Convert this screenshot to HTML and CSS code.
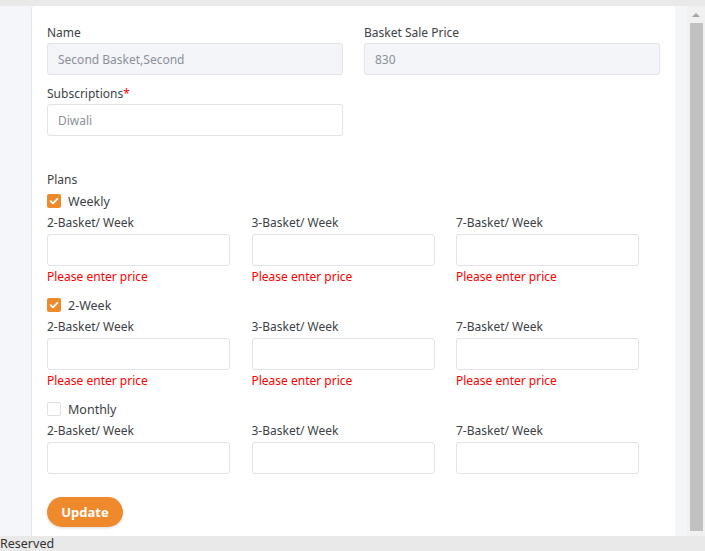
FILE: index.html
```html
<!DOCTYPE html>
<html>
<head>
<meta charset="utf-8">
<link rel="stylesheet" href="styles.css">
</head>
<body>
<div class="topbar"></div>
<div class="viewport">
  <div class="main">
    <div class="card">
      <div class="row two">
        <div class="field">
          <label class="lbl">Name</label>
          <input class="inp disabled" value="Second Basket,Second" disabled>
        </div>
        <div class="field">
          <label class="lbl">Basket Sale Price</label>
          <input class="inp disabled" value="830" disabled>
        </div>
      </div>
      <div class="row two gap-sm">
        <div class="field">
          <label class="lbl">Subscriptions<span class="req">*</span></label>
          <input class="inp" value="Diwali">
        </div>
      </div>

      <div class="plans-title">Plans</div>

      <div class="plan">
        <div class="check-row">
          <span class="cb on"><svg viewBox="0 0 14 14" width="14" height="14"><path d="M3.6 7.2 L6 9.4 L10.4 4.8" fill="none" stroke="#fff" stroke-width="1.8" stroke-linecap="round" stroke-linejoin="round"/></svg></span>
          <span class="cb-label">Weekly</span>
        </div>
        <div class="row three">
          <div class="field"><label class="lbl">2-Basket/ Week</label><input class="inp"><div class="err">Please enter price</div></div>
          <div class="field"><label class="lbl">3-Basket/ Week</label><input class="inp"><div class="err">Please enter price</div></div>
          <div class="field"><label class="lbl">7-Basket/ Week</label><input class="inp"><div class="err">Please enter price</div></div>
        </div>
      </div>

      <div class="plan">
        <div class="check-row">
          <span class="cb on"><svg viewBox="0 0 14 14" width="14" height="14"><path d="M3.6 7.2 L6 9.4 L10.4 4.8" fill="none" stroke="#fff" stroke-width="1.8" stroke-linecap="round" stroke-linejoin="round"/></svg></span>
          <span class="cb-label">2-Week</span>
        </div>
        <div class="row three">
          <div class="field"><label class="lbl">2-Basket/ Week</label><input class="inp"><div class="err">Please enter price</div></div>
          <div class="field"><label class="lbl">3-Basket/ Week</label><input class="inp"><div class="err">Please enter price</div></div>
          <div class="field"><label class="lbl">7-Basket/ Week</label><input class="inp"><div class="err">Please enter price</div></div>
        </div>
      </div>

      <div class="plan">
        <div class="check-row">
          <span class="cb"></span>
          <span class="cb-label">Monthly</span>
        </div>
        <div class="row three">
          <div class="field"><label class="lbl">2-Basket/ Week</label><input class="inp"></div>
          <div class="field"><label class="lbl">3-Basket/ Week</label><input class="inp"></div>
          <div class="field"><label class="lbl">7-Basket/ Week</label><input class="inp"></div>
        </div>
      </div>

      <button class="btn">Update</button>
    </div>
  </div>
  <div class="scrollbar">
    <div class="arrow"></div>
    <div class="thumb"></div>
  </div>
</div>
<div class="footer">Reserved</div>
</body>
</html>
```
FILE: styles.css
```css
* { box-sizing: border-box; }
html, body { margin: 0; padding: 0; }
body {
  width: 705px;
  height: 551px;
  overflow: hidden;
  font-family: "Noto Sans", "Open Sans", sans-serif;
  font-size: 12px;
  color: #3c3f45;
  background: #e9e9e9;
}
.topbar { height: 6px; background: #e9e9e9; }
.viewport {
  display: flex;
  height: 530px;
  background: #f5f6fa;
}
.main {
  flex: 1;
  padding-left: 31px;
  padding-right: 12px;
  overflow: hidden;
}
.card {
  background: #fff;
  height: 100%;
  border-left: 1px solid #e3e5ea;
  border-radius: 3px 3px 0 0;
  padding: 17px 16px 0 15px;
}
.row { display: grid; }
.row.two { grid-template-columns: 296px 296px; column-gap: 21px; }
.row.three { grid-template-columns: 183px 183px 183px; column-gap: 21.5px; }
.gap-sm { margin-top: 9px; }
.lbl {
  display: block;
  line-height: 17px;
  margin-bottom: 3px;
  font-size: 12px;
  color: #3c3f45;
}
.row.two .lbl { padding-top: 1px; margin-bottom: 2px; }
.req { color: #ff0000; }
.inp {
  display: block;
  width: 100%;
  height: 32px;
  border: 1px solid #e1e3e8;
  border-radius: 3px;
  padding: 0 10px;
  font-family: inherit;
  font-size: 12px;
  color: #8b9098;
  background: #fff;
  outline: none;
}
.inp.disabled { background: #f4f5f9; }
.plans-title {
  margin-top: 35px;
  line-height: 17px;
  font-size: 12px;
  color: #3c3f45;
}
.plan { margin-top: 8px; }
.plans-title + .plan { margin-top: 2px; }
.check-row {
  display: flex;
  align-items: center;
  height: 22px;
  margin-bottom: 2px;
}
.cb {
  width: 14px;
  height: 14px;
  border-radius: 2px;
  border: 1px solid #dddfe3;
  background: #fff;
  display: flex;
}
.cb.on { background: #ef8a2c; border: none; }
.cb-label { margin-left: 7px; color: #3c3f45; font-size: 12.5px; }
.err {
  color: #ff0000;
  line-height: 18px;
  padding-top: 2px;
  font-size: 12px;
}
.btn {
  display: block;
  margin-top: 23px;
  height: 30px;
  width: 76px;
  border: none;
  border-radius: 15px;
  background: #ef8a2c;
  color: #fff;
  font-family: inherit;
  font-weight: 700;
  font-size: 13px;
  box-shadow: 0 1px 3px rgba(0,0,0,0.15);
  padding: 0;
}
.scrollbar {
  width: 18px;
  background: #f1f1f1;
  display: flex;
  flex-direction: column;
  align-items: center;
}
.arrow {
  margin-top: 7px;
  width: 0;
  height: 0;
  border-left: 4px solid transparent;
  border-right: 4px solid transparent;
  border-bottom: 4px solid #a3a3a3;
}
.thumb {
  margin-top: 6px;
  width: 13px;
  height: 508px;
  background: #c1c1c1;
  margin-left: 1px;
}
.footer {
  height: 15px;
  background: #e9e9e9;
  line-height: 14px;
  padding-top: 1px;
  font-size: 12.5px;
  color: #333;
  white-space: nowrap;
}
```
